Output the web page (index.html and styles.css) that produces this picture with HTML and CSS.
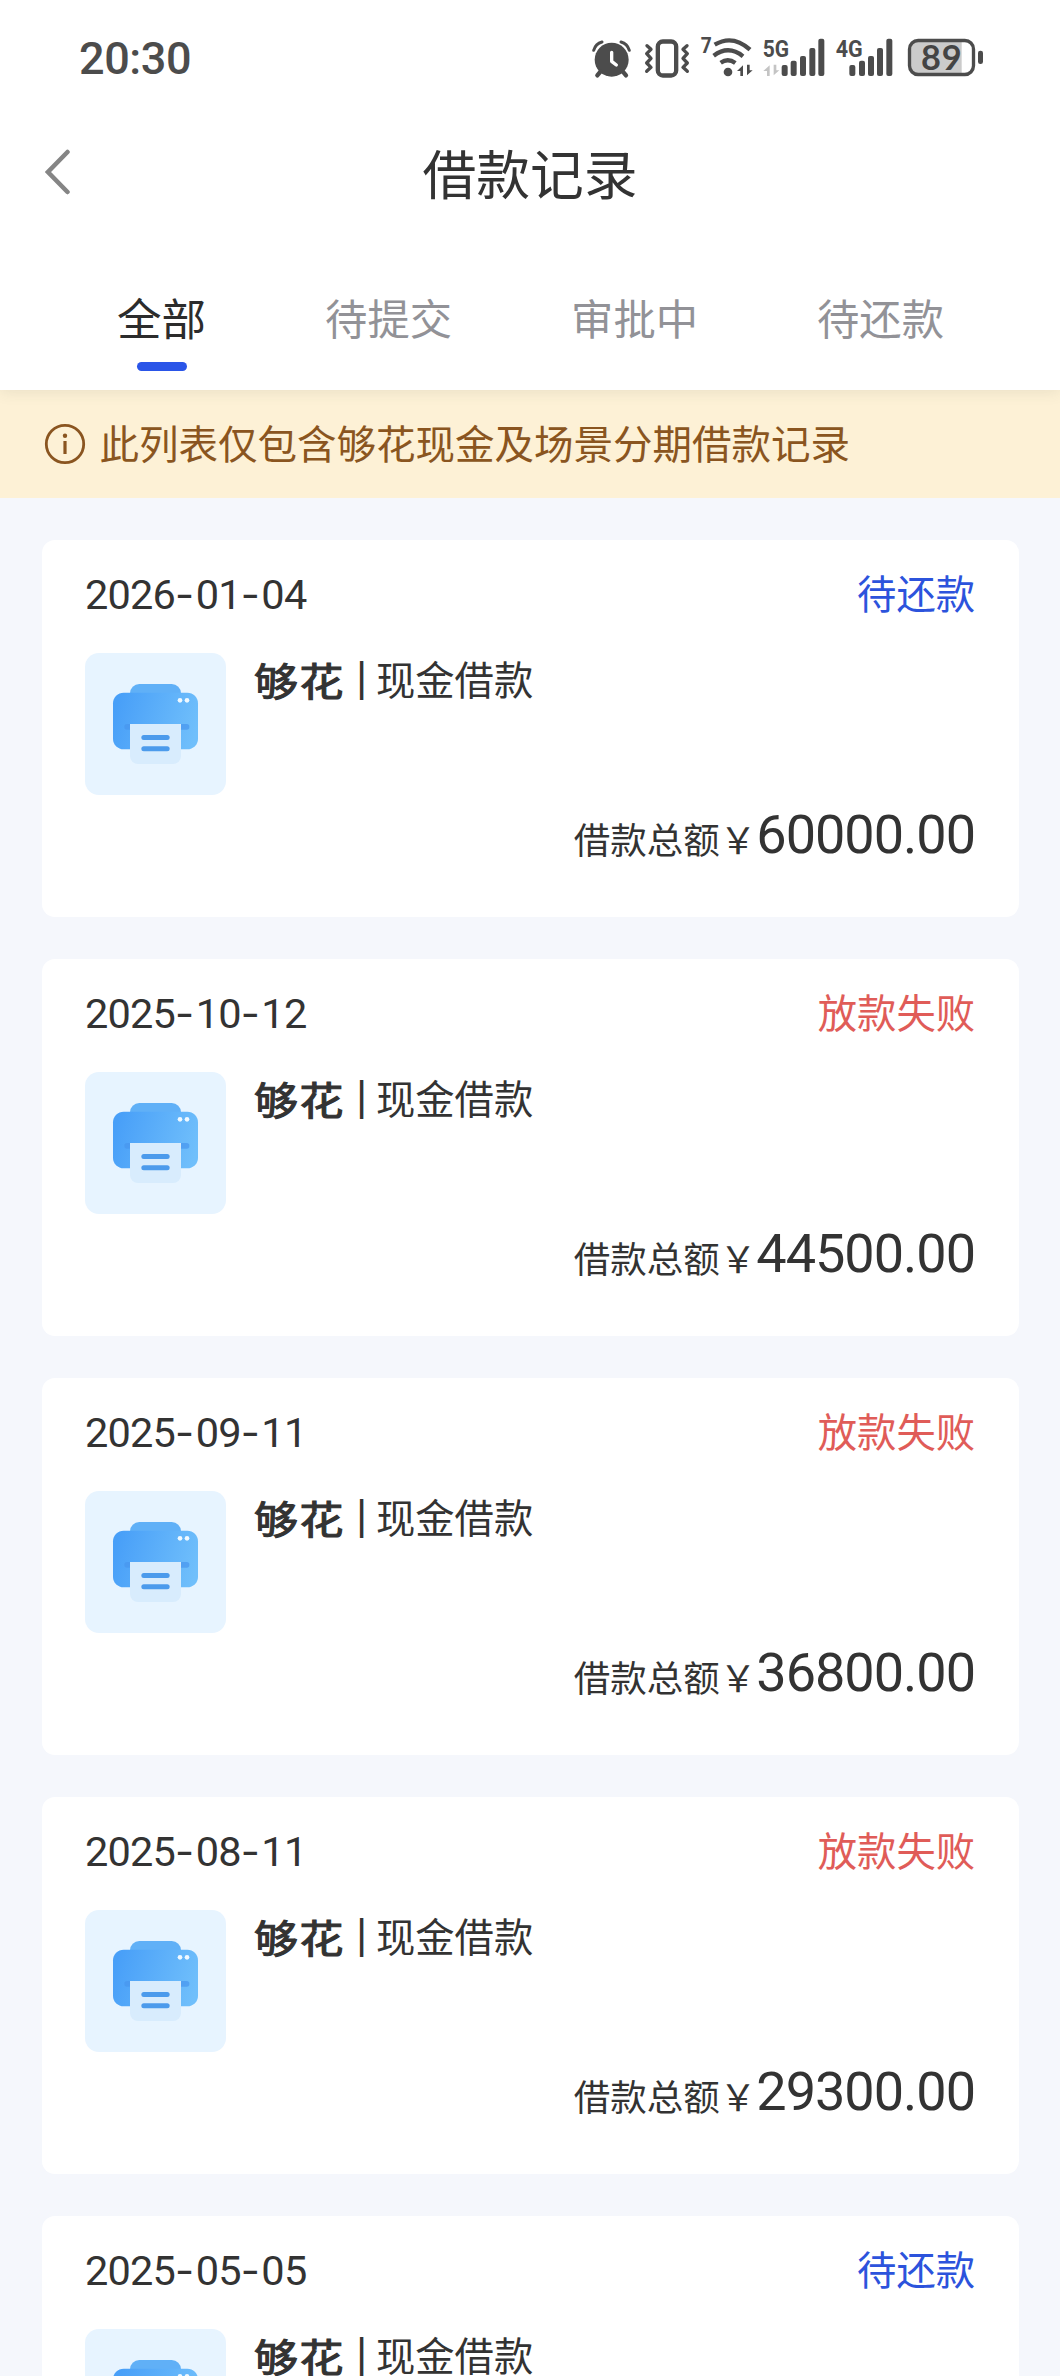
FILE: index.html
```html
<!DOCTYPE html>
<html lang="zh-CN">

<head>
    <meta charset="UTF-8">
    <meta name="viewport" content="width=device-width, initial-scale=1.0">
    <title>借款记录</title>
    <link rel="stylesheet" href="styles.css">
</head>

<body>
    <!-- printer icon, reused in every card -->
    <svg class="defs" width="0" height="0">
        <defs>
            <linearGradient id="bodyFill" x1="0" y1="0.4" x2="1" y2="0.6">
                <stop offset="0" stop-color="#489ff8" />
                <stop offset="1" stop-color="#70bffb" />
            </linearGradient>
            <symbol id="printer" viewBox="0 0 423 426">
                <path d="M135 130V121a28 28 0 0 1 28-28h97a28 28 0 0 1 28 28v9z" fill="#60b0f7" />
                <rect x="84" y="119" width="255" height="170" rx="32" fill="url(#bodyFill)" />
                <rect x="118" y="213" width="195" height="17" rx="8" fill="#4795ee" opacity="0.7" />
                <path d="M135 213h153v96a24 24 0 0 1-24 24H159a24 24 0 0 1-24-24z" fill="#d8ecfd" />
                <rect x="169" y="246" width="85" height="15" rx="7.5" fill="#4c9bec" />
                <rect x="169" y="280" width="85" height="15" rx="7.5" fill="#4c9bec" />
                <circle cx="285" cy="142" r="7" fill="#f0f9ff" />
                <circle cx="306" cy="142" r="7" fill="#f0f9ff" />
            </symbol>
        </defs>
    </svg>

    <div class="page">
        <div class="header">
            <div class="status-bar">
                <span class="time">20:30</span>
                <div class="status-icons">
                    <!-- alarm -->
                    <svg width="46" height="80" viewBox="60 0 138 240">
                        <circle cx="125" cy="119" r="51" fill="#4c4c4c" />
                        <path d="M71 91Q77 71 96 66M178 91Q172 71 153 66" fill="none" stroke="#4c4c4c" stroke-width="9" stroke-linecap="round" />
                        <path d="M92 154L82 166M158 154L168 166" stroke="#4c4c4c" stroke-width="13" stroke-linecap="round" />
                        <path d="M125 97v27l14 11" fill="none" stroke="#fff" stroke-width="10" stroke-linecap="round" stroke-linejoin="round" />
                    </svg>
                    <!-- vibrate -->
                    <svg width="61" height="80" viewBox="198 0 183 240">
                        <rect x="263.500" y="64.500" width="55" height="102" rx="15" fill="none" stroke="#4c4c4c" stroke-width="13" />
                        <path d="M231 77l12 11-13 13 13 14-13 14 13 13-13 12M351 77l-12 11 13 13-13 14 13 14-13 13 13 12" fill="none" stroke="#4c4c4c" stroke-width="10" stroke-linecap="round" stroke-linejoin="round" />
                    </svg>
                    <!-- wifi -->
                    <svg width="63" height="80" viewBox="381 0 189 240">
                        <text x="392" y="99" class="net" font-size="66" textLength="33" lengthAdjust="spacingAndGlyphs">7</text>
                        <path d="M434 74Q488 42 540 89M431 107Q476 74 519 109M452 128Q474 113 496 129" fill="none" stroke="#4c4c4c" stroke-width="13" />
                        <circle cx="474" cy="156" r="13" fill="#4c4c4c" />
                        <path d="M501 153l18-17v32h-8v-15zM548 151l-17 15v-32h8v17z" fill="#4c4c4c" />
                    </svg>
                    <!-- 5G -->
                    <svg width="69" height="80" viewBox="570 0 207 240">
                        <text x="578" y="111" class="net" font-size="73" textLength="79" lengthAdjust="spacingAndGlyphs">5G</text>
                        <path d="M580 153l19-17v32h-8v-15zM628 151l-17 15v-32h8v17z" fill="#c4c4c4" />
                        <g fill="#4c4c4c">
                            <rect x="635" y="135" width="18" height="33" rx="6" />
                            <rect x="662" y="122" width="18" height="46" rx="6" />
                            <rect x="690" y="108" width="18" height="60" rx="6" />
                            <rect x="718" y="84" width="18" height="84" rx="6" />
                            <rect x="745" y="56" width="18" height="112" rx="6" />
                        </g>
                    </svg>
                    <!-- 4G -->
                    <svg width="69" height="80" viewBox="777 0 207 240">
                        <text x="797" y="111" class="net" font-size="73" textLength="81" lengthAdjust="spacingAndGlyphs">4G</text>
                        <g fill="#4c4c4c">
                            <rect x="838" y="135" width="18" height="33" rx="6" />
                            <rect x="867" y="122" width="18" height="46" rx="6" />
                            <rect x="894" y="108" width="18" height="60" rx="6" />
                            <rect x="921" y="84" width="18" height="84" rx="6" />
                            <rect x="949" y="56" width="18" height="112" rx="6" />
                        </g>
                    </svg>
                    <!-- battery -->
                    <svg width="92" height="80" viewBox="984 0 276 240">
                        <path d="M1175 62h-133a24 24 0 0 0-24 24v52a24 24 0 0 0 24 24h133z" fill="#cbcbcb" />
                        <rect x="1018.500" y="61.500" width="192" height="102" rx="26" fill="none" stroke="#4c4c4c" stroke-width="10" />
                        <rect x="1224" y="92" width="15" height="40" rx="7" fill="#4c4c4c" />
                        <text x="1053" y="149" class="battery" font-size="103" textLength="122" lengthAdjust="spacing">89</text>
                    </svg>
                </div>
            </div>

            <div class="nav">
                <svg class="back" width="26" height="46" viewBox="0 0 26 46">
                    <path d="M22.500 3L3 23l19.500 20" fill="none" stroke="#858585" stroke-width="4.500" stroke-linecap="round" stroke-linejoin="miter" />
                </svg>
                <h1>借款记录</h1>
            </div>

            <div class="tabs">
                <div class="tab active">全部</div>
                <div class="tab">待提交</div>
                <div class="tab">审批中</div>
                <div class="tab">待还款</div>
            </div>
        </div>

        <div class="notice">
            <svg width="42" height="42" viewBox="0 0 42 42">
                <circle cx="21" cy="21" r="18.700" fill="none" stroke="#8a5520" stroke-width="2.800" />
                <circle cx="21" cy="12.800" r="2.200" fill="#8a5520" />
                <path d="M21 18v13" stroke="#8a5520" stroke-width="3.200" />
            </svg>
            <span>此列表仅包含够花现金及场景分期借款记录</span>
        </div>

        <div class="list">
            <div class="card">
                <div class="card-top">
                    <span class="date">2026<span class="dash">-</span>01<span class="dash">-</span>04</span>
                    <span class="state">待还款</span>
                </div>
                <div class="card-body">
                    <svg class="thumb"><use href="#printer" /></svg>
                    <div class="name"><span class="brand">够花</span><span class="bar">|</span><span>现金借款</span></div>
                </div>
                <div class="total">借款总额￥<span class="money">60000.00</span></div>
            </div>

            <div class="card">
                <div class="card-top">
                    <span class="date">2025<span class="dash">-</span>10<span class="dash">-</span>12</span>
                    <span class="state failed">放款失败</span>
                </div>
                <div class="card-body">
                    <svg class="thumb"><use href="#printer" /></svg>
                    <div class="name"><span class="brand">够花</span><span class="bar">|</span><span>现金借款</span></div>
                </div>
                <div class="total">借款总额￥<span class="money">44500.00</span></div>
            </div>

            <div class="card">
                <div class="card-top">
                    <span class="date">2025<span class="dash">-</span>09<span class="dash">-</span>11</span>
                    <span class="state failed">放款失败</span>
                </div>
                <div class="card-body">
                    <svg class="thumb"><use href="#printer" /></svg>
                    <div class="name"><span class="brand">够花</span><span class="bar">|</span><span>现金借款</span></div>
                </div>
                <div class="total">借款总额￥<span class="money">36800.00</span></div>
            </div>

            <div class="card">
                <div class="card-top">
                    <span class="date">2025<span class="dash">-</span>08<span class="dash">-</span>11</span>
                    <span class="state failed">放款失败</span>
                </div>
                <div class="card-body">
                    <svg class="thumb"><use href="#printer" /></svg>
                    <div class="name"><span class="brand">够花</span><span class="bar">|</span><span>现金借款</span></div>
                </div>
                <div class="total">借款总额￥<span class="money">29300.00</span></div>
            </div>

            <div class="card">
                <div class="card-top">
                    <span class="date">2025<span class="dash">-</span>05<span class="dash">-</span>05</span>
                    <span class="state">待还款</span>
                </div>
                <div class="card-body">
                    <svg class="thumb"><use href="#printer" /></svg>
                    <div class="name"><span class="brand">够花</span><span class="bar">|</span><span>现金借款</span></div>
                </div>
            </div>
        </div>
    </div>
</body>

</html>
```
FILE: styles.css
```css
* {
  margin: 0;
  padding: 0;
  box-sizing: border-box;
}

body {
  font-family: "Noto Sans CJK SC", sans-serif;
  color: #333;
  background-color: #f5f7fc;
}

svg {
  display: block;
  flex-shrink: 0;
}

.defs {
  position: absolute;
}

.page {
  display: flex;
  flex-direction: column;
  width: 1060px;
  height: 2376px;
  overflow: hidden;
}

.header {
  display: flex;
  flex-direction: column;
  flex-shrink: 0;
  height: 390px;
  background-color: #fff;
  box-shadow: 0 2px 14px rgba(60, 80, 60, 0.1);
  z-index: 1;
}

/* status bar */
.status-bar {
  display: flex;
  justify-content: space-between;
  height: 100px;
  padding: 20px 70px 0 79px;
}

.time {
  font-family: Roboto, sans-serif;
  font-size: 45px;
  font-weight: 500;
  line-height: 77px;
  letter-spacing: -0.4px;
  color: #4c4c4c;
}

.status-icons {
  display: flex;
}

.net {
  font-family: Roboto, sans-serif;
  font-weight: 700;
  fill: #4c4c4c;
}

.battery {
  font-family: Lato, sans-serif;
  font-weight: 700;
  fill: #444;
}

/* title */
.nav {
  display: flex;
  align-items: center;
  height: 144px;
  padding: 0 45px;
}

.nav h1 {
  flex-grow: 1;
  margin-right: 26px;
  text-align: center;
  font-size: 53.8px;
  font-weight: 400;
  line-height: 80px;
}

.tabs {
  display: flex;
  justify-content: space-between;
  height: 146px;
  padding: 43px 116px 0 117px;
}

.tab {
  font-size: 42.3px;
  line-height: 60px;
  color: #929297;
}

.tab.active {
  display: flex;
  flex-direction: column;
  align-items: center;
  gap: 15px;
  font-size: 44.5px;
  color: #2c2c2c;
}

.tab.active::after {
  content: "";
  width: 50px;
  height: 9px;
  border-radius: 5px;
  background-color: #2a55e8;
}

.notice {
  display: flex;
  align-items: center;
  flex-shrink: 0;
  gap: 13.500px;
  height: 108px;
  padding-left: 44px;
  font-size: 39.5px;
  line-height: 60px;
  color: #8a5520;
  background-color: #fdf1d6;
}

.notice span {
  margin-top: -4px;
}

/* records */
.list {
  display: flex;
  flex-direction: column;
  gap: 42px;
  padding: 41.500px 41.500px 0 42px;
}

.card {
  flex-shrink: 0;
  height: 377px;
  padding: 22px 43.500px 0 43px;
  border-radius: 13px;
  background-color: #fff;
}

.card-top {
  display: flex;
  justify-content: space-between;
  align-items: baseline;
  height: 60px;
  line-height: 60px;
}

.date {
  font-family: Roboto, sans-serif;
  font-size: 41.500px;
  letter-spacing: -0.8px;
}

.dash {
  font-family: Inter, sans-serif;
  letter-spacing: 1.500px;
}

.state {
  font-size: 39.3px;
  color: #2c53dc;
}

.state.failed {
  color: #e05c58;
}

.card-body {
  display: flex;
  gap: 27px;
  margin-top: 31px;
}

.thumb {
  width: 141px;
  height: 142px;
  border-radius: 14px;
  background-color: #e7f4ff;
}

.name {
  display: flex;
  height: 50px;
  font-size: 39.3px;
  line-height: 49px;
}

.brand {
  width: 102px;
  margin-left: 1px;
  font-size: 38.5px;
  line-height: 52px;
  letter-spacing: 1.500px;
  -webkit-text-stroke: 1.1px #333;
  transform: scaleX(1.14);
  transform-origin: left;
}

.bar {
  width: 20px;
  font-family: Roboto, sans-serif;
  font-size: 46px;
  line-height: 51px;
}

.total {
  margin-top: 19px;
  text-align: right;
  font-size: 36.5px;
  line-height: 50px;
  white-space: nowrap;
}

.money {
  font-family: Roboto, sans-serif;
  font-size: 54px;
  line-height: 1px;
  letter-spacing: -1px;
  vertical-align: 1px;
}
```
